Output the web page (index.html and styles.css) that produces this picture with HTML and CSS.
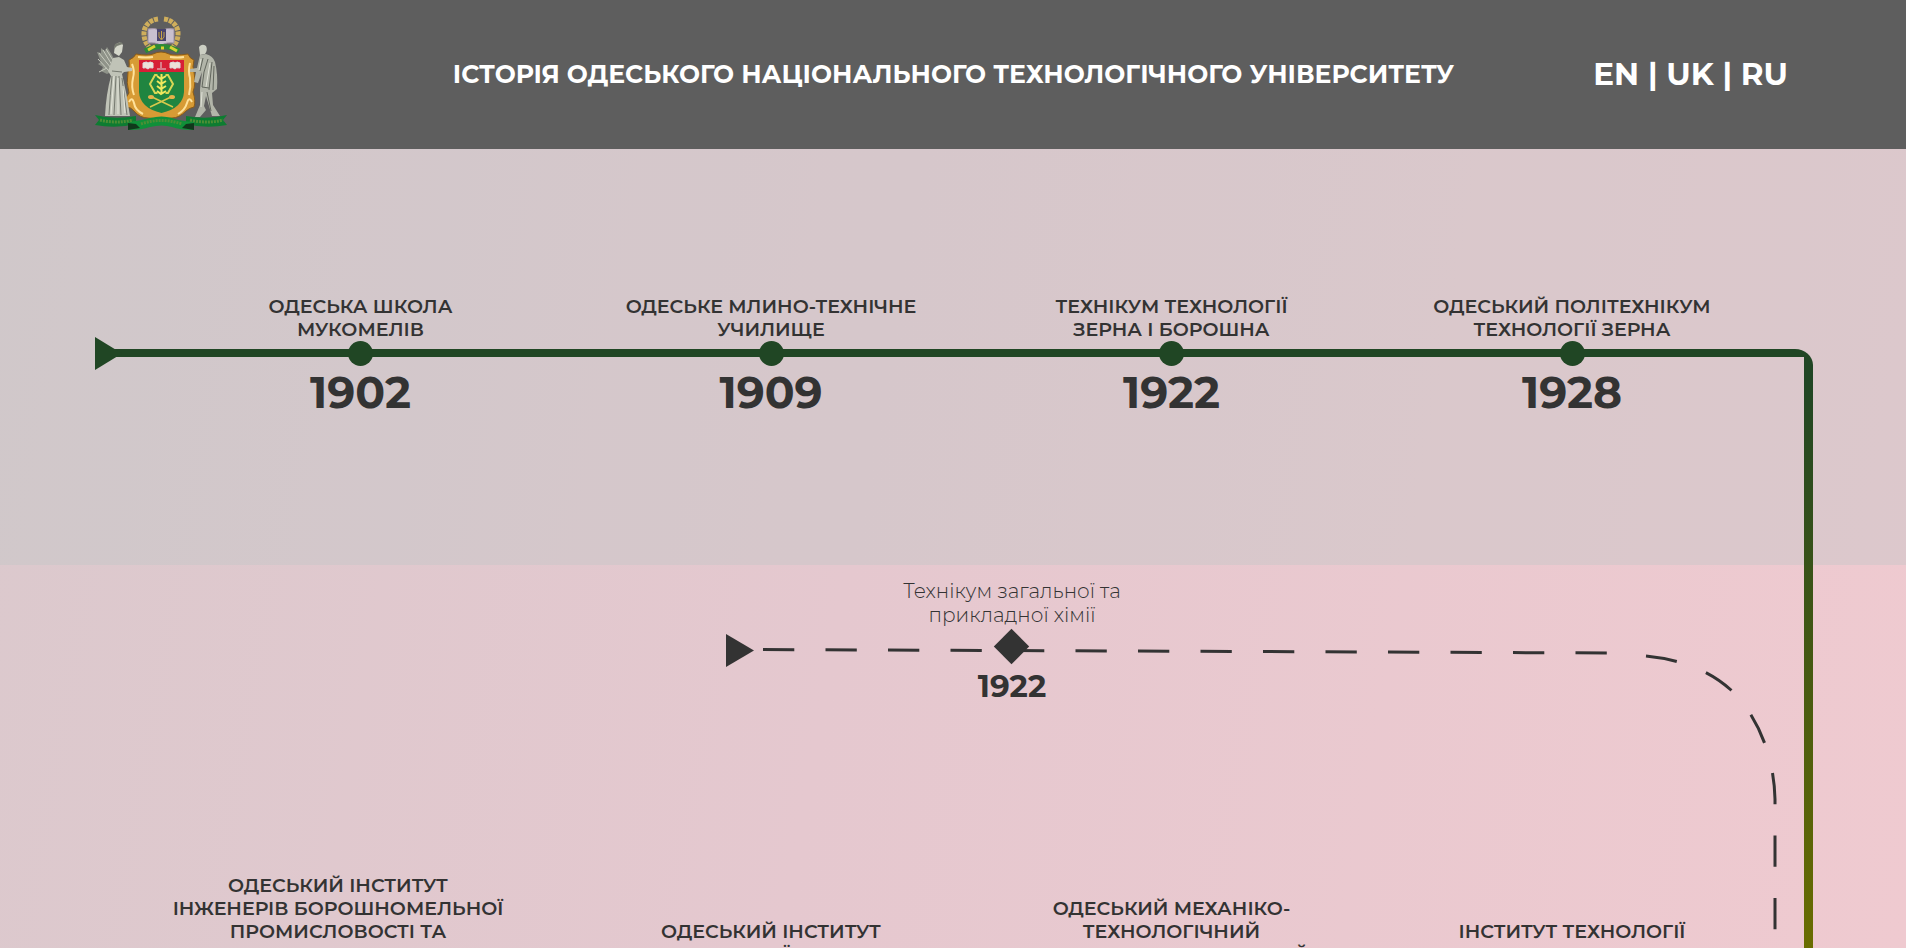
FILE: index.html
```html
<!DOCTYPE html>
<html lang="uk">
<head>
<meta charset="utf-8">
<title>Історія ОНТУ</title>
<link rel="stylesheet" href="styles.css">
</head>
<body>
<header class="header">
  <a class="logo" href="#" aria-label="ОНТУ">
    <svg viewBox="0 0 132 116" width="132" height="116" aria-hidden="true">
      <!-- wreath -->
      <g fill="none" stroke="#cfae5c" stroke-width="5" stroke-dasharray="4 1">
        <path d="M63 3C48 5 45 20 54 31"/><path d="M69 3C84 5 87 20 78 31"/>
      </g>
      <path d="M53 13q7-2 13 2q6-4 13-2v14q-7-1-13 2q-6-3-13-2z" fill="#c9c0cf" stroke="#9c8fa2"/>
      <rect x="62" y="13" width="9" height="12" fill="#49436d"/>
      <path d="M64 16v5l2.500 3l2.500-3v-5M66.500 15v8" fill="none" stroke="#c6a446"/>
      <path d="M50 35q16-9 34 0" fill="none" stroke="#2c8a36" stroke-width="5"/>
      <path d="M53 34l7-4M66 32h3M75 31l7 4" stroke="#d7d233" stroke-width="3"/>
      <!-- shield frame -->
      <path d="M41 38q12 2 17 0q8-4 16 0q5 2 19 0q2 5 6 6q-2 7 0 12q2 12-1 20q3 9 1 15q-5 1-8 4q-7 7-14 7q-11 0-12 6q-2-6-12-6q-8 0-14-7q-3-4-8-4q-2-8 3-14q-3-10-1-21q2-7 1-12q5-2 7-6z" fill="#d79b35" stroke="#8b5b17"/>
      <path d="M43 41q8 1 15 0M75 41q8 1 14 0M37 48q3 7 1 14q-2 9 1 17M95 47q-2 8 0 15q1 9-1 17M34 86q3-6 5 1q1 7 9 11M97 86q-3-6-5 1q-2 7-9 11" fill="none" stroke="#ffe29a" stroke-width="2"/>
      <path d="M44 55H89V76Q88 92 66.500 97Q45 92 44 76z" fill="#208540"/>
      <path d="M44 44H89V56H44z" fill="#d71f36"/>
      <path d="M48 47q4-2 5 0q2-2 5 0v5q-4-1-5 1q-2-2-5-1zM75 47q4-2 5 0q2-2 5 0v5q-4-1-5 1q-2-2-5-1zM62 53h9M66 46v6" fill="#eee2d9" stroke="#ddd"/>
      <path d="M60 59h13l5 9l-5 9H60l-5-9z" fill="none" stroke="#d7d755" stroke-width="2"/>
      <path d="M66.500 57v22" stroke="#208540" stroke-width="8"/>
      <path d="M66.500 58v20M62 60l4 3l5-3M62 65l4 3l5-3M62 70l4 3l5-3M62 75l4 3l5-3" fill="none" stroke="#efe85d" stroke-width="2"/>
      <path d="M55 91L76 81M78 91L57 81" stroke="#d8c94c" stroke-width="1.500"/>
      <ellipse cx="56" cy="81" rx="3" ry="2" fill="#e5b24a"/><ellipse cx="77" cy="81" rx="3" ry="2" fill="#e5b24a"/>
      <!-- left statue with sheaf -->
      <path d="M2 36l4 1l0-5l4 3l2-4l5 8l4 8l-3 8l-6 3l-6-3l2-4l-5-3l3-2z" fill="#8f9389"/>
      <path d="M4 37l12 15M8 34l9 15M11 33l8 13M3 43l11 12M4 56l8-4" stroke="#c9ccc0" fill="none"/>
      <path d="M18 42l6-1l5 3l3 7l5 1v3l-8 1l-2 2q5 20 8 42H10q1-22 6-40l-3-5z" fill="#c0c3b7"/>
      <path d="M20 29q5-5 8 0l-1 7l-3 4l-5-3z" fill="#d5d7cb"/>
      <path d="M19 33l1-5l6-2l2 2l-6 2z" fill="#777b70"/>
      <path d="M17 60q-2 20-3 39M21 60l-2 39M24 60l2 39M27 62l5 37M17 55l10 1" fill="none" stroke="#767a70"/>
      <path d="M19 60l-3 38M23 62v36M28 70l2 27" fill="none" stroke="#e4e6da"/>
      <!-- right statue in a robe -->
      <path d="M104 31q3-4 7-1q2 4-1 8l-5 1z" fill="#cccfc3"/>
      <path d="M105 39l6-1q7 2 9 8q3 12 2 27l-5 4l1 12l7 11h-8l-6-20l-2 10l2 4l-6 7h-5l5-12l0-16l2-17l-4 11l-4-1l2-10l-6 0v-3l7-1z" fill="#b2b5a9"/>
      <path d="M113 43q-5 12-6 28l7 1M117 46l-3 28M119 50l-1 24M108 42l-3 13M112 76l4 19" fill="none" stroke="#62665d"/>
      <path d="M115 47l-4 24M106 43l-2 11M107 76l-1 15" fill="none" stroke="#e1e3d8"/>
      <!-- ribbon -->
      <path d="M0 99q19 5 41 1v8Q21 113 0 109l4-5zM132 99q-20 5-41 1v8q20 5 41 1l-4-5z" fill="#0d7c31"/>
      <path d="M33 106q16-2 22-4q12-3 22 0q8 3 22 4v8q-14 0-22-3q-10-3-22 0q-8 3-22 3z" fill="#109039"/>
      <path d="M33 107l8 1l4 4l-12 2zM99 107l-8 1l-4 4l12 2z" fill="#10381b"/>
      <path d="M5 104q16 4 33 0M46 108q20-7 41 0M95 104q17 4 33 0" fill="none" stroke="#4d8f35" stroke-width="3" stroke-dasharray="2 1"/>
    </svg>
  </a>
  <h1 class="title">ІСТОРІЯ ОДЕСЬКОГО НАЦІОНАЛЬНОГО ТЕХНОЛОГІЧНОГО УНІВЕРСИТЕТУ</h1>
  <nav class="langs"><a href="#">EN</a> | <a href="#">UK</a> | <a href="#">RU</a></nav>
</header>
<main class="history">
  <div class="track"></div>
  <section class="era-early">
    <article class="stage"><h2>ОДЕСЬКА ШКОЛА<br>МУКОМЕЛІВ</h2><i class="dot"></i><p class="year">1902</p></article>
    <article class="stage"><h2>ОДЕСЬКЕ МЛИНО-ТЕХНІЧНЕ<br>УЧИЛИЩЕ</h2><i class="dot"></i><p class="year">1909</p></article>
    <article class="stage"><h2>ТЕХНІКУМ ТЕХНОЛОГІЇ<br>ЗЕРНА І БОРОШНА</h2><i class="dot"></i><p class="year">1922</p></article>
    <article class="stage"><h2>ОДЕСЬКИЙ ПОЛІТЕХНІКУМ<br>ТЕХНОЛОГІЇ ЗЕРНА</h2><i class="dot"></i><p class="year">1928</p></article>
  </section>
  <section class="era-late">
    <div class="branch">
      <svg class="branch-line" width="1054" height="383" viewBox="0 0 1054 383" aria-hidden="true">
        <path d="M0 69L28 85.500L0 102z" fill="#333"/>
        <g fill="none" stroke="#333" stroke-width="3" stroke-dasharray="31.300 31.200">
          <path d="M37 84.500L884 88"/>
          <path d="M920 91C950 94 981 103 1005 125C1031 150 1048 190 1049 234V383"/>
        </g>
      </svg>
      <article class="side-stage"><h3>Технікум загальної та<br>прикладної хімії</h3><i class="diamond"></i><p class="side-year">1922</p></article>
    </div>
    <div class="row">
      <article class="stage"><h2>ОДЕСЬКИЙ ІНСТИТУТ<br>ІНЖЕНЕРІВ БОРОШНОМЕЛЬНОЇ<br>ПРОМИСЛОВОСТІ ТА<br>ЕЛЕВАТОРНОГО<br>ГОСПОДАРСТВА</h2></article>
      <article class="stage"><h2>ОДЕСЬКИЙ ІНСТИТУТ<br>ТЕХНОЛОГІЇ ЗЕРНА І<br>БОРОШНА</h2></article>
      <article class="stage"><h2>ОДЕСЬКИЙ МЕХАНІКО-<br>ТЕХНОЛОГІЧНИЙ<br>ІНСТИТУТ ПОЛІТЕХНІЧНИЙ<br>ІМ. СТАЛІНА</h2></article>
      <article class="stage"><h2>ІНСТИТУТ ТЕХНОЛОГІЇ<br>ЗЕРНА І БОРОШНА ІМ.<br>СТАЛІНА</h2></article>
    </div>
  </section>
</main>
</body>
</html>
```
FILE: styles.css
```css
* { box-sizing: border-box; margin: 0; padding: 0; }
body {
  height: 100vh;
  display: flex;
  flex-direction: column;
  overflow: hidden;
  font-family: Montserrat, Inter, sans-serif;
  color: #333;
}
a { color: inherit; text-decoration: none; }
.header {
  flex: none;
  display: grid;
  grid-template-columns: 1fr auto 1fr;
  align-items: center;
  padding: 16px 118px 17px 95px;
  background: #5e5e5e;
  color: #fff;
}
.logo { justify-self: start; }
.logo svg { display: block; }
.title { font-size: 25px; font-weight: 700; line-height: 32px; margin-left: 24px; white-space: nowrap; }
.langs { justify-self: end; font-size: 31px; font-weight: 700; line-height: 40px; white-space: nowrap; }
.history {
  flex: 1;
  position: relative;
  overflow: hidden;
  background: linear-gradient(100deg, #dbc9cd 0%, #e5c8cf 45%, #efcad0 100%);
}
.track {
  position: absolute;
  top: 200px;
  left: 95px;
  right: 93px;
  bottom: 0;
  border-top-right-radius: 18px 16px;
  background:
    linear-gradient(#204624, #204624) 0 0 / 100% 8px no-repeat,
    linear-gradient(#204624 0, #204624 30px, #6a6d00 100%) 100% 0 / 9px 100% no-repeat;
}
.track::before {
  content: "";
  position: absolute;
  top: -12px;
  left: 0;
  width: 27px;
  height: 33px;
  background: #204624;
  clip-path: polygon(0 0, 100% 50%, 0 100%);
}
.era-early {
  display: grid;
  grid-template-columns: 409fr 412fr 389fr 412fr;
  padding: 146px 128px 147px 156px;
  background: rgba(190, 198, 198, 0.37);
}
.stage {
  position: relative;
  display: flex;
  flex-direction: column;
  align-items: center;
  text-align: center;
}
.stage h2 { font-size: 19px; font-weight: 600; line-height: 23px; white-space: nowrap; }
.dot { width: 25px; height: 25px; border-radius: 50%; background: #204624; }
.year { font-size: 44px; font-weight: 700; line-height: 52px; }
.branch {
  position: relative;
  height: 309px;
  padding: 14px 0 0 118px;
  display: flex;
  justify-content: center;
}
.branch-line { position: absolute; top: 0; right: 126px; }
.side-stage { position: relative; text-align: center; display: flex; flex-direction: column; align-items: center; }
.side-stage h3 { font-size: 20px; font-weight: 300; line-height: 24px; }
.diamond { width: 25px; height: 25px; margin: 7px 0; background: #333; transform: rotate(45deg); }
.side-year { font-size: 31px; font-weight: 700; line-height: 40px; }
.row {
  display: grid;
  grid-template-columns: 454fr 412fr 389fr 412fr;
  align-items: end;
  padding: 0 128px 0 111px;
}
```
